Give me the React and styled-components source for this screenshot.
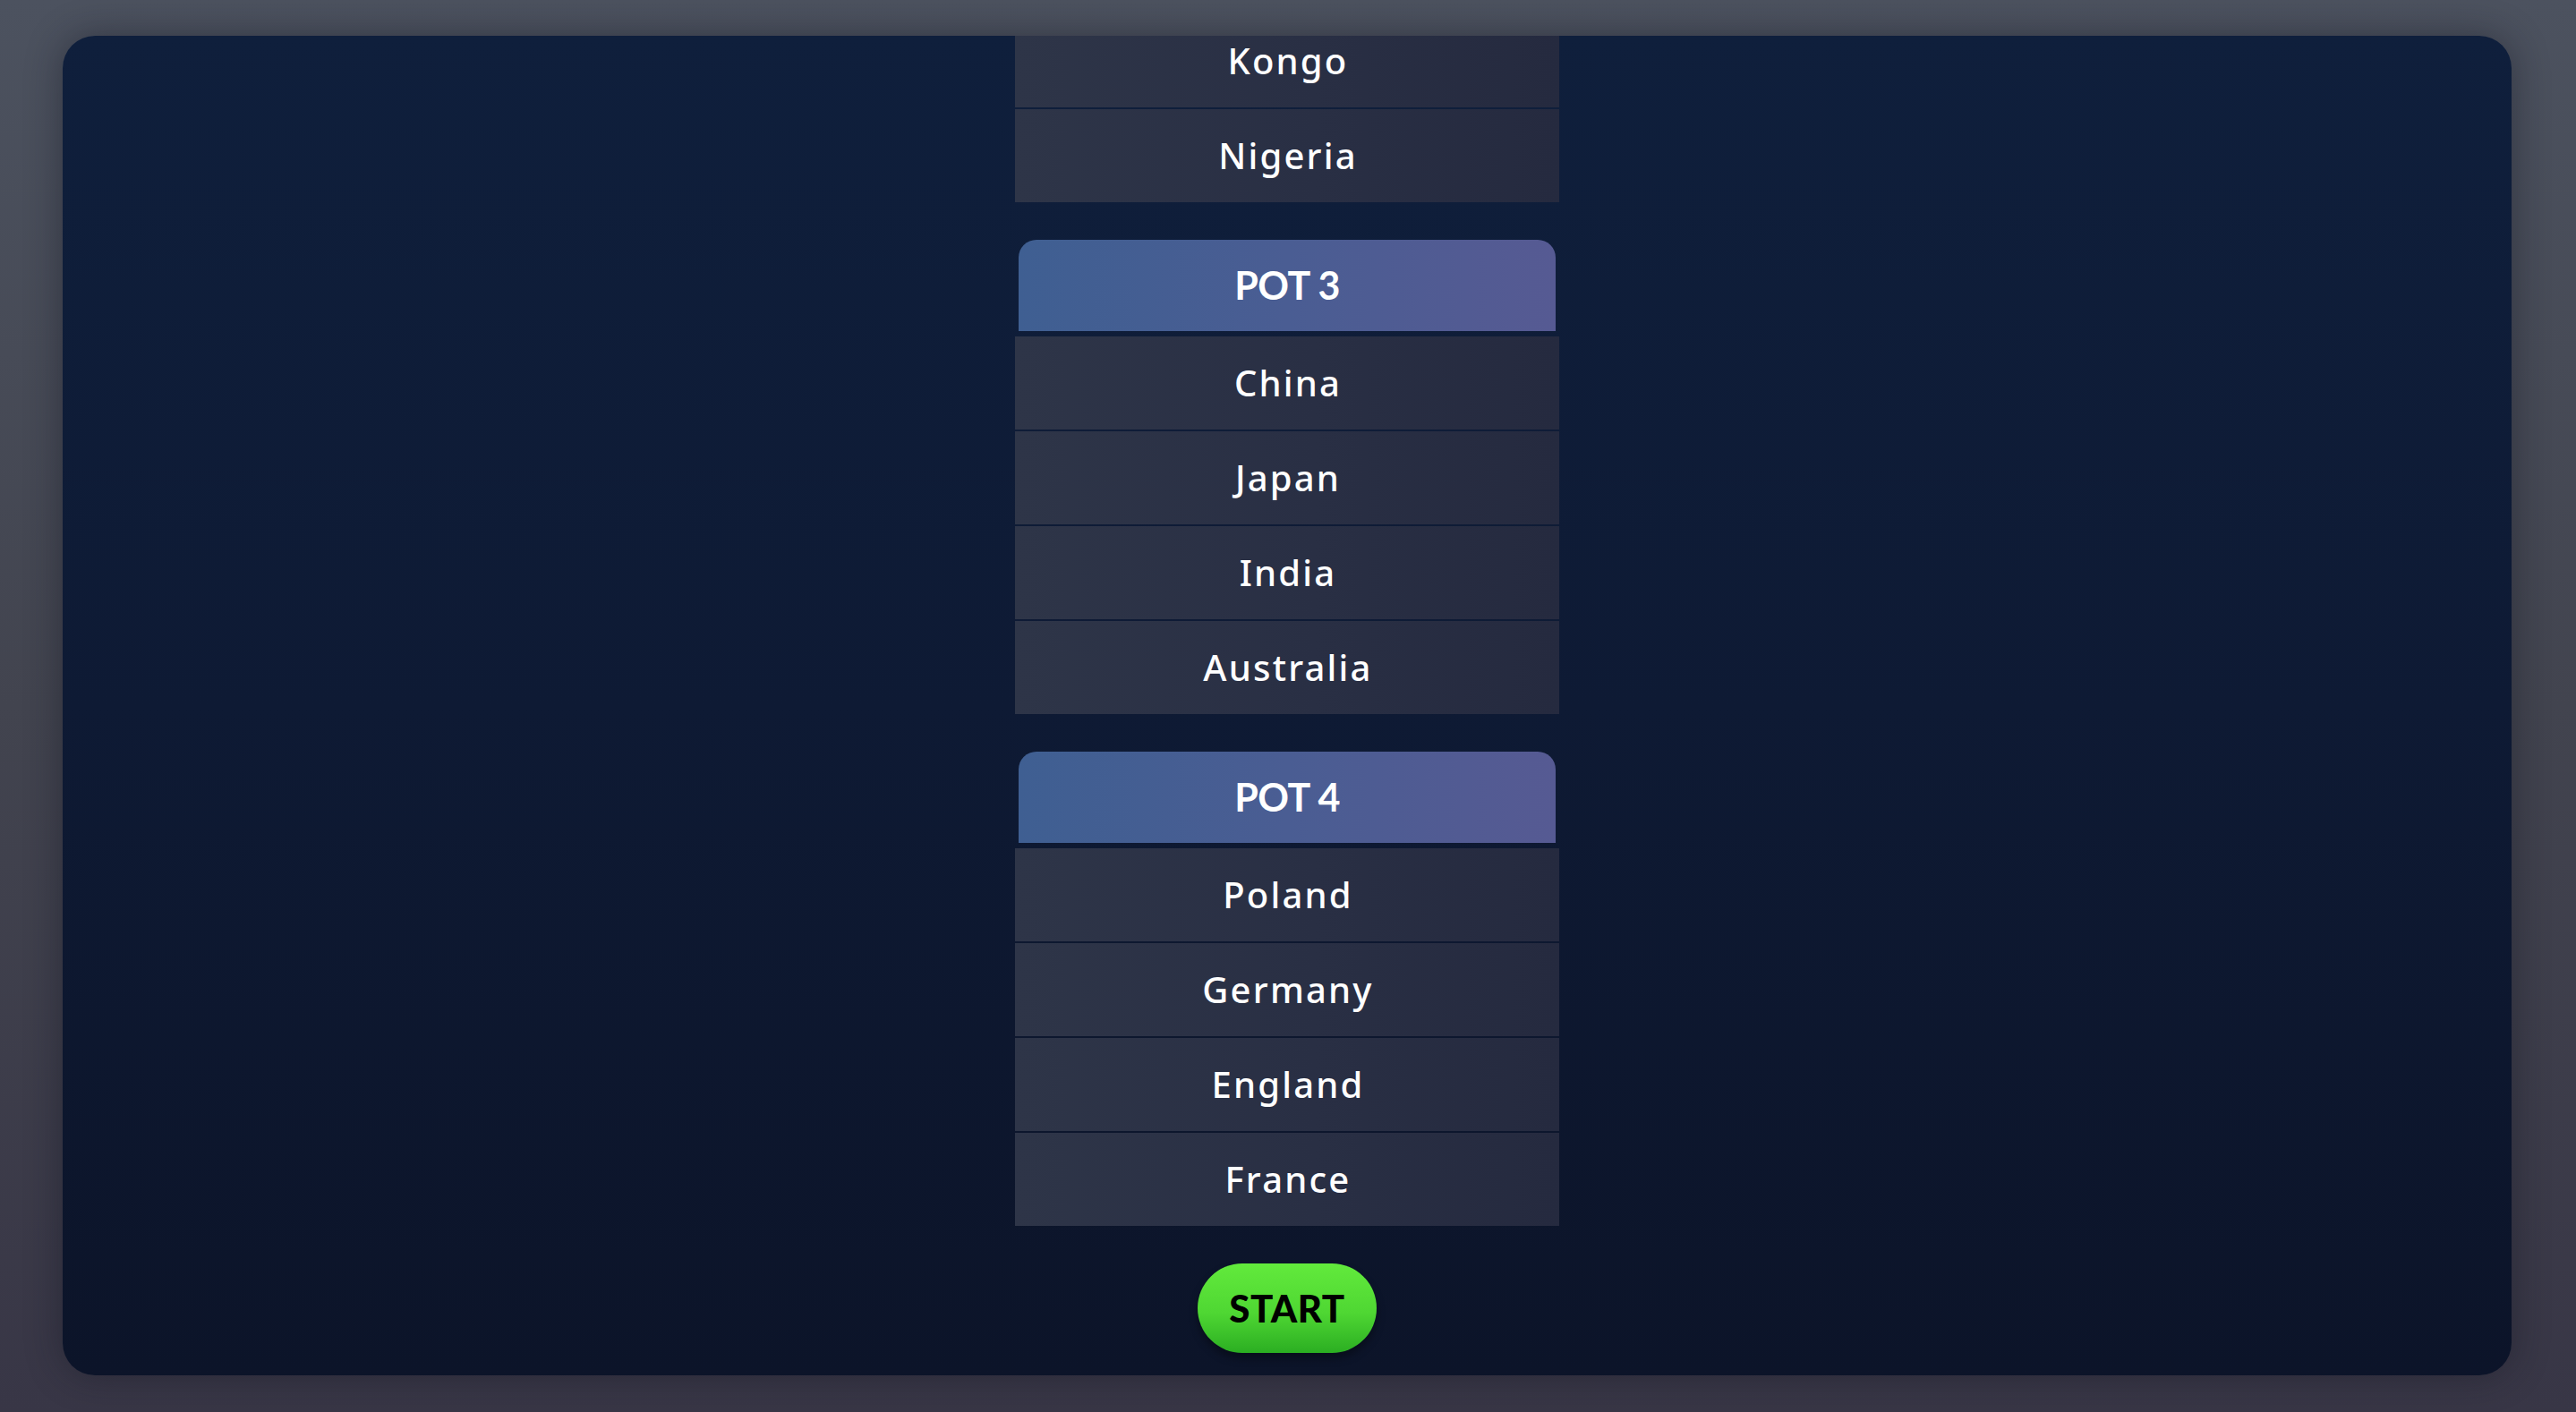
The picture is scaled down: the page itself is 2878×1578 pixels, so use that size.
import React from "react";
import styled, { createGlobalStyle } from "styled-components";

const GlobalStyle = createGlobalStyle`
  html, body {
    margin: 0;
    height: 100%;
  }
  body {
    background: linear-gradient(180deg, #4c525f 0%, #42444f 50%, #383646 100%);
    font-family: "Noto Sans", "Lato", sans-serif;
  }
  #root {
    height: 100%;
  }
`;

const Page = styled.div`
  box-sizing: border-box;
  height: 100vh;
  padding: 40px 72px 41px 70px;
  display: flex;
`;

const Card = styled.div`
  flex: 1;
  display: flex;
  flex-direction: column;
  justify-content: flex-end;
  align-items: center;
  gap: 42px;
  padding-bottom: 25px;
  overflow: hidden;
  border-radius: 36px;
  background: linear-gradient(180deg, #0f1f3c 0%, #0e1a34 50%, #0c1429 100%);
  box-shadow: 0 0 40px rgba(20, 22, 34, 0.45);
`;

const Pot = styled.section`
  width: 608px;
  flex-shrink: 0;
  display: flex;
  flex-direction: column;
  align-items: stretch;
  gap: 2px;
`;

const PotHeader = styled.div`
  margin: 0 4px 4px;
  height: 100px;
  display: flex;
  align-items: center;
  justify-content: center;
  border-radius: 20px 20px 0 0;
  background: linear-gradient(90deg, #3f5f92 0%, #4a5d93 50%, #565a93 100%);
  color: #fff;
  font-family: "Lato", sans-serif;
  font-size: 43px;
  font-weight: 700;
  letter-spacing: -0.5px;
  padding-bottom: 2px;
`;

const Team = styled.div`
  height: 104px;
  display: flex;
  align-items: center;
  justify-content: center;
  padding: 0 0 2px 2px;
  box-sizing: border-box;
  background: linear-gradient(90deg, #2e3548 0%, #292f44 55%, #252a3f 100%);
  color: #fff;
  font-size: 40px;
  font-weight: 500;
  letter-spacing: 2.2px;
`;

const StartButton = styled.button`
  flex-shrink: 0;
  width: 200px;
  height: 100px;
  border: none;
  border-radius: 50px;
  background: linear-gradient(180deg, #62ea3c 0%, #4fd733 55%, #2bae22 100%);
  box-shadow: 0 6px 10px rgba(0, 0, 0, 0.35);
  color: #000;
  font-family: "Lato", "Roboto", sans-serif;
  font-size: 42px;
  font-weight: 900;
  letter-spacing: 0.5px;
  cursor: pointer;
`;

const pots = [
  { name: "POT 1", teams: ["Brazil", "Argentina", "Mexico", "USA"] },
  { name: "POT 2", teams: ["Egypt", "Morocco", "Kongo", "Nigeria"] },
  { name: "POT 3", teams: ["China", "Japan", "India", "Australia"] },
  { name: "POT 4", teams: ["Poland", "Germany", "England", "France"] },
];

export default function App() {
  return (
    <>
      <GlobalStyle />
      <Page>
        <Card>
          {pots.map(pot => (
            <Pot key={pot.name}>
              <PotHeader>{pot.name}</PotHeader>
              {pot.teams.map(team => (
                <Team key={team}>{team}</Team>
              ))}
            </Pot>
          ))}
          <StartButton>START</StartButton>
        </Card>
      </Page>
    </>
  );
}
